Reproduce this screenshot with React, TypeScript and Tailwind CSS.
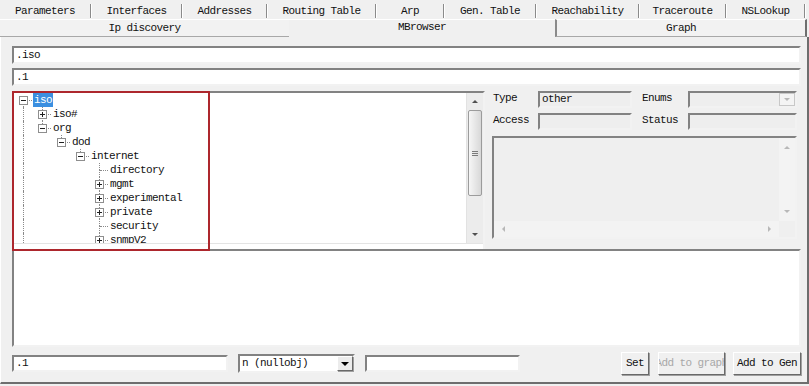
import React from 'react';

const sunken = 'border-2 border-t-[#828282] border-l-[#828282] border-r-[#f2f2f2] border-b-[#f2f2f2]';
const raised = 'border border-t-white border-l-white border-r-[#696969] border-b-[#696969] shadow-[1px_1px_0_#a0a0a0]';

const topTabs = [
  { label: 'Parameters', cls: 'w-[92px]' },
  { label: 'Interfaces', cls: 'w-[91px]' },
  { label: 'Addresses', cls: 'w-[85px]' },
  { label: 'Routing Table', cls: 'w-[109px]' },
  { label: 'Arp', cls: 'w-[68px]' },
  { label: 'Gen. Table', cls: 'w-[92px]' },
  { label: 'Reachability', cls: 'w-[103px]' },
  { label: 'Traceroute', cls: 'w-[87px]' },
  { label: 'NSLookup', cls: 'w-[79px]' },
];

type TreeNode = {
  label: string;
  guides: boolean[];
  box?: '+' | '-';
  top: boolean;
  bottom: boolean;
  sel?: boolean;
};

const deep = [true, false, false, false];
const tree: TreeNode[] = [
  { label: 'iso', guides: [], box: '-', top: false, bottom: true, sel: true },
  { label: 'iso#', guides: [true], box: '+', top: true, bottom: true },
  { label: 'org', guides: [true], box: '-', top: true, bottom: false },
  { label: 'dod', guides: [true, false], box: '-', top: true, bottom: false },
  { label: 'internet', guides: [true, false, false], box: '-', top: true, bottom: false },
  { label: 'directory', guides: deep, top: true, bottom: true },
  { label: 'mgmt', guides: deep, box: '+', top: true, bottom: true },
  { label: 'experimental', guides: deep, box: '+', top: true, bottom: true },
  { label: 'private', guides: deep, box: '+', top: true, bottom: true },
  { label: 'security', guides: deep, top: true, bottom: true },
  { label: 'snmpV2', guides: deep, box: '+', top: true, bottom: true },
];

function Tri({ dir, color }: { dir: 'up' | 'down' | 'left' | 'right'; color: string }) {
  if (dir === 'up')
    return <span className={`w-0 h-0 border-l-[3px] border-r-[3px] border-b-[3px] border-l-transparent border-r-transparent ${color === 'dark' ? 'border-b-[#505050]' : 'border-b-[#b8b8b8]'}`} />;
  if (dir === 'down')
    return <span className={`w-0 h-0 border-l-[3px] border-r-[3px] border-t-[3px] border-l-transparent border-r-transparent ${color === 'dark' ? 'border-t-[#505050]' : 'border-t-[#b8b8b8]'}`} />;
  if (dir === 'left')
    return <span className="w-0 h-0 border-t-[3px] border-b-[3px] border-r-[3px] border-t-transparent border-b-transparent border-r-[#b8b8b8]" />;
  return <span className="w-0 h-0 border-t-[3px] border-b-[3px] border-l-[3px] border-t-transparent border-b-transparent border-l-[#b8b8b8]" />;
}

function ExpandBox({ kind }: { kind: '+' | '-' }) {
  return (
    <span className="absolute left-[5px] top-[3px] w-[9px] h-[9px] border border-[#8e8e8e] bg-white flex items-center justify-center">
      <span className="absolute w-[5px] h-px bg-[#202020]" />
      {kind === '+' && <span className="absolute w-px h-[5px] bg-[#202020]" />}
    </span>
  );
}

function TreeRow({ n }: { n: TreeNode }) {
  return (
    <div className="flex h-[14px] items-center shrink-0">
      {n.guides.map((g, i) => (
        <span key={i} className="relative w-[19px] h-full shrink-0">
          {g && <span className="absolute left-[9px] top-0 h-full border-l border-dotted border-[#8a8a8a]" />}
        </span>
      ))}
      <span className="relative w-[19px] h-full shrink-0">
        {n.top && <span className="absolute left-[9px] top-0 h-[7px] border-l border-dotted border-[#8a8a8a]" />}
        {n.bottom && <span className="absolute left-[9px] top-[7px] h-[7px] border-l border-dotted border-[#8a8a8a]" />}
        <span className="absolute left-[10px] top-[7px] w-[8px] border-t border-dotted border-[#8a8a8a]" />
        {n.box && <ExpandBox kind={n.box} />}
      </span>
      <span className={`px-[1px] h-full leading-[15px] whitespace-nowrap ${n.sel ? 'bg-[#3b8fe0] text-white' : 'text-[#111]'}`}>
        {n.label}
      </span>
    </div>
  );
}

function TreeScroll() {
  return (
    <div className="w-[17px] h-full flex flex-col bg-[#ececec] border-l border-[#e2e2e2]">
      <div className="h-[17px] flex items-center justify-center"><Tri dir="up" color="dark" /></div>
      <div className="flex-1 flex flex-col">
        <div className="h-[86px] mx-px rounded-[2px] border border-[#9c9c9c] bg-linear-to-r from-[#f6f6f6] to-[#d8d8d8] flex flex-col items-center justify-center gap-px">
          <span className="w-[6px] h-px bg-[#7a7a7a]" />
          <span className="w-[6px] h-px bg-[#7a7a7a]" />
          <span className="w-[6px] h-px bg-[#7a7a7a]" />
        </div>
      </div>
      <div className="h-[17px] flex items-center justify-center"><Tri dir="down" color="dark" /></div>
    </div>
  );
}

function Field({ cls, text, bg }: { cls: string; text?: string; bg?: string }) {
  return (
    <div className={`${cls} ${sunken} ${bg ?? 'bg-white'} flex items-center pl-[2px] whitespace-nowrap overflow-hidden`}>
      {text}
    </div>
  );
}

export default function App() {
  return (
    <div className="relative w-[809px] h-[386px] overflow-hidden bg-[#f0f0f0] text-[11px] tracking-[-0.6px] text-[#111] font-['Liberation_Mono','DejaVu_Sans_Mono',monospace]">
      {/* tab row 1 */}
      <div className="flex h-[19px] items-center">
        {topTabs.map((t) => (
          <div key={t.label} className={`${t.cls} h-full flex items-center pt-[3px]`}>
            <span className="flex-1 text-center whitespace-nowrap pt-px">{t.label}</span>
            <span className="w-[2px] h-[14px] border-l border-[#8a8a8a] border-r border-r-white" />
          </div>
        ))}
      </div>
      {/* tab row 2 */}
      <div className="flex h-[18px] pr-[2px]">
        <div className="w-[289px] h-full flex items-center justify-center border-t border-t-white border-b border-b-[#a8a8a8] bg-[#f2f2f2]">
          Ip discovery
        </div>
        <div className="w-[266px] h-full flex items-center justify-center border-t border-t-white pb-[2px]">MBrowser</div>
        <div className="flex-1 h-full flex items-center justify-center border-l-2 border-l-[#8a8a8a] border-t border-t-white border-b border-b-[#a8a8a8] border-r-2 border-r-[#6e6e6e] bg-[#f2f2f2]">
          Graph
        </div>
      </div>

      {/* main panel */}
      <div className="h-[347px] border-l border-l-white border-r-2 border-r-[#6e6e6e] border-b-2 border-b-[#6e6e6e] pl-[11px] pr-[6px] pt-[9px] flex flex-col">
        <Field cls="h-[18px] w-full" text=".iso" />
        <Field cls="h-[18px] w-full mt-[4px]" text=".1" />

        <div className="flex h-[158px] mt-[5px]">
          {/* tree */}
          <div className={`w-[473px] h-full ${sunken} border-b-0 bg-white`}>
            <div className="h-[151px] flex border-b border-[#e4e4e4]">
              <div className="flex-1 overflow-hidden flex flex-col">
                {tree.map((n) => (
                  <TreeRow key={n.label} n={n} />
                ))}
              </div>
              <TreeScroll />
            </div>
          </div>

          {/* properties */}
          <div className="ml-[7px] w-[305px] flex flex-col">
            <div className="flex items-center h-[17px]">
              <span className="w-[46px] pl-px -mt-[3px]">Type</span>
              <Field cls="w-[94px] h-[17px]" text="other" bg="bg-[#eeeeee]" />
              <span className="w-[46px] ml-[10px] -mt-[3px]">Enums</span>
              <div className={`w-[109px] h-[17px] ${sunken} bg-[#eeeeee] flex justify-end`}>
                <div className="w-[16px] h-full border border-[#c8c8c8] bg-[#f4f4f4] flex items-center justify-center">
                  <Tri dir="down" color="light" />
                </div>
              </div>
            </div>
            <div className="flex items-center h-[17px] mt-[5px]">
              <span className="w-[46px] pl-px -mt-[3px]">Access</span>
              <Field cls="w-[94px] h-[17px]" bg="bg-[#eeeeee]" />
              <span className="w-[46px] ml-[10px] -mt-[3px]">Status</span>
              <Field cls="w-[109px] h-[17px]" bg="bg-[#eeeeee]" />
            </div>
            <div className={`mt-[6px] h-[103px] ${sunken} bg-[#efefef] flex flex-col`}>
              <div className="flex-1 flex">
                <div className="flex-1" />
                <div className="w-[16px] flex flex-col items-center justify-between py-[8px] bg-[#f3f3f3]">
                  <Tri dir="up" color="light" />
                  <Tri dir="down" color="light" />
                </div>
              </div>
              <div className="h-[16px] flex">
                <div className="flex-1 flex items-center justify-between px-[8px] bg-[#f3f3f3]">
                  <Tri dir="left" color="light" />
                  <Tri dir="right" color="light" />
                </div>
                <div className="w-[16px] bg-[#efefef]" />
              </div>
            </div>
          </div>
        </div>

        {/* lower white area */}
        <div className={`h-[98px] w-[789px] ${sunken} bg-white`} />

        {/* bottom row */}
        <div className="flex items-center h-[23px] mt-[5px]">
          <Field cls="w-[216px] h-[17px]" text=".1" />
          <div className={`ml-[10px] w-[117px] h-[19px] ${sunken} bg-white flex items-center`}>
            <span className="flex-1 pl-[2px] whitespace-nowrap overflow-hidden">n (nullobj)</span>
            <div className={`w-[16px] h-[15px] ${raised} bg-[#ececec] flex items-center justify-center`}>
              <span className="w-0 h-0 border-l-[4px] border-r-[4px] border-t-[4px] border-l-transparent border-r-transparent border-t-[#000]" />
            </div>
          </div>
          <Field cls="ml-[10px] w-[155px] h-[17px]" />
          <div className="flex-1" />
          <button className={`w-[28px] h-[23px] ${raised} bg-[#f0f0f0] flex items-center justify-center`}>Set</button>
          <button className={`ml-[9px] w-[67px] h-[23px] ${raised} bg-[#f0f0f0] text-[#a8a8a8] flex items-center justify-center overflow-hidden whitespace-nowrap`}>
            Add to graph
          </button>
          <button className={`ml-[8px] w-[68px] h-[23px] ${raised} bg-[#f0f0f0] flex items-center justify-center whitespace-nowrap`}>
            Add to Gen
          </button>
        </div>
      </div>

      {/* red annotation rectangle */}
      <div className="absolute left-[12px] top-[91px] w-[198px] h-[160px] border-2 border-[#ad272d] pointer-events-none" />
    </div>
  );
}
